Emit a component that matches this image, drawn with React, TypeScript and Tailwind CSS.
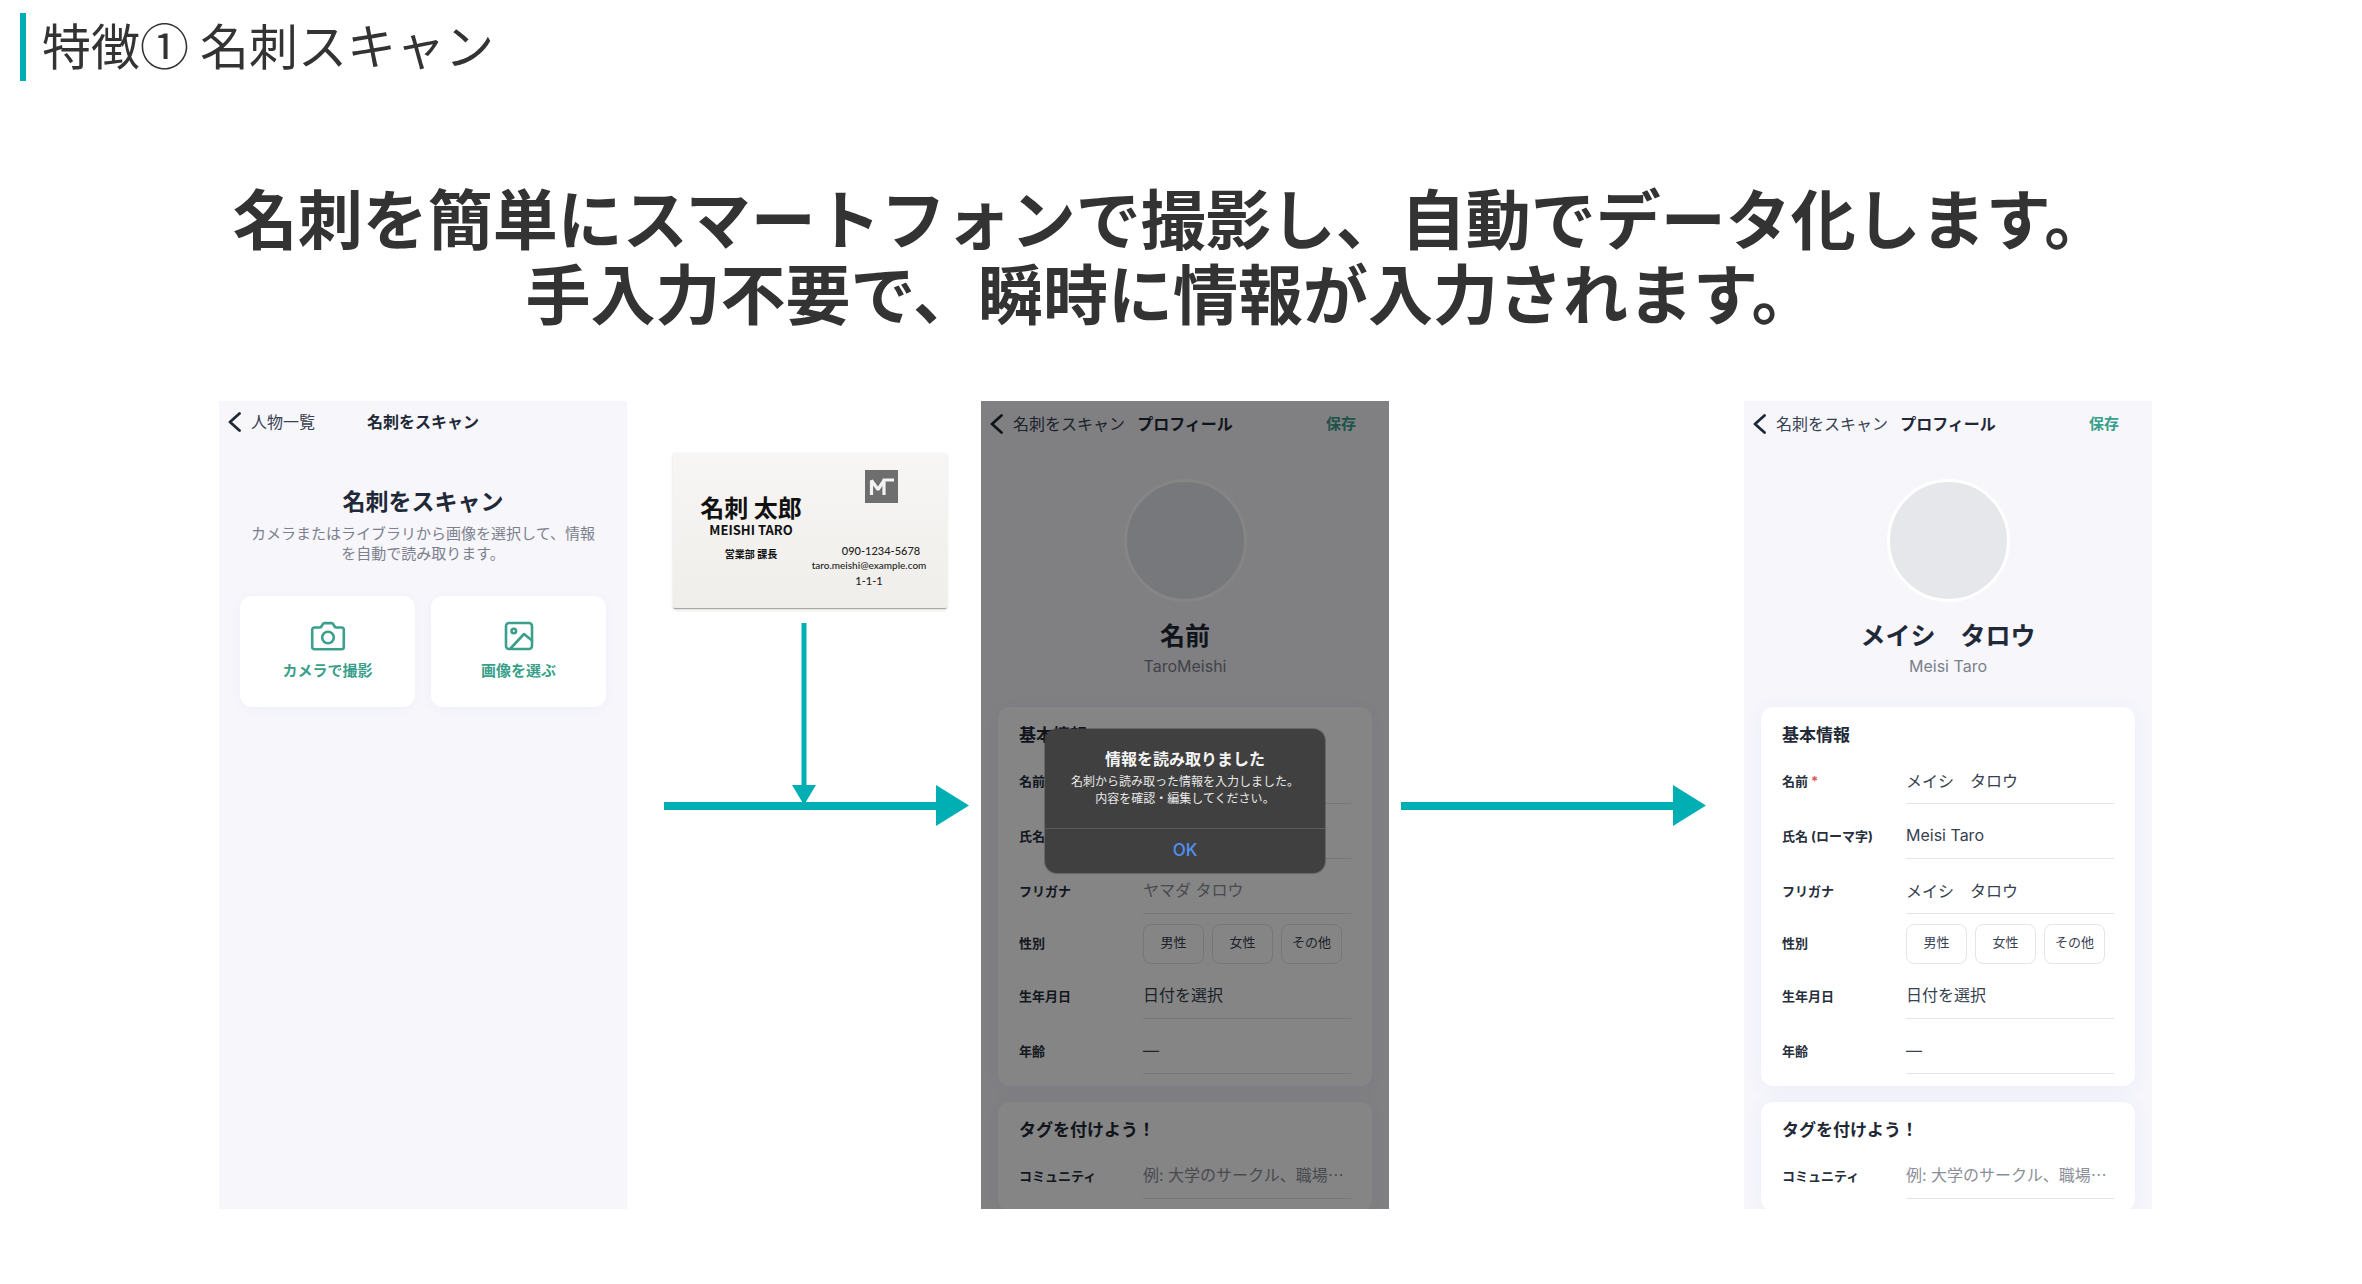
import React from "react";

function Chevron() {
  return (
    <svg width="14" height="20" viewBox="0 0 14 20" fill="none" stroke="currentColor" strokeWidth="2.8" strokeLinecap="round" strokeLinejoin="round" aria-hidden="true">
      <path d="M11.500 1.500 2 10l9.500 8.500" />
    </svg>
  );
}

function ScreenHeader({ back, title, action, className }: { back: string; title: string; action?: string; className: string }) {
  return (
    <header className={`grid grid-cols-[1fr_auto_1fr] items-center px-[9px] pb-[2px] text-[#1f2937] ${className}`}>
      <button type="button" className="flex items-center gap-[9px] justify-self-start text-[16px] leading-6 whitespace-nowrap text-[#374151]">
        <span className="text-[#1f2937]"><Chevron /></span>
        {back}
      </button>
      <h2 className="text-[16px] leading-6 font-bold whitespace-nowrap">{title}</h2>
      {action && (
        <button type="button" className="mr-6 justify-self-end text-[15px] leading-6 font-bold text-[#3a9f8b]">{action}</button>
      )}
    </header>
  );
}

function CameraIcon() {
  return (
    <svg width="36" height="30" viewBox="0 0 36 30" fill="none" stroke="currentColor" strokeWidth="2.6" strokeLinejoin="round" strokeLinecap="round" aria-hidden="true">
      <path d="M4.500 6.500h5.200c.8 0 1.300-.3 1.700-1l1.400-2.400c.4-.7.9-1 1.700-1h7c.8 0 1.300.3 1.700 1l1.400 2.400c.4.7.9 1 1.700 1h5.200c1.400 0 2.300.9 2.300 2.300v17.200c0 1.400-.9 2.300-2.300 2.300h-27c-1.400 0-2.300-.9-2.300-2.300V8.800c0-1.400.9-2.300 2.300-2.300Z" />
      <circle cx="18" cy="16.500" r="5.800" />
    </svg>
  );
}

function PictureIcon() {
  return (
    <svg width="30" height="30" viewBox="0 0 30 30" fill="none" stroke="currentColor" strokeWidth="2.6" strokeLinejoin="round" strokeLinecap="round" aria-hidden="true">
      <rect x="2" y="2" width="26" height="26" rx="3" />
      <circle cx="9.800" cy="10" r="2.300" />
      <path d="M6.500 27.500 20 13l8 6.500" />
    </svg>
  );
}

const PICK =
  "flex h-[111px] flex-col items-center justify-center gap-2 rounded-xl bg-white shadow-[0_2px_12px_rgba(80,90,200,0.04)]";

function ScanScreen() {
  return (
    <section className="aspect-[408/808] min-w-0 overflow-hidden bg-[#f6f6fb]">
      <ScreenHeader back="人物一覧" title="名刺をスキャン" className="h-[43px]" />
      <div className="mt-[42px] px-7 text-center">
        <h3 className="text-[23px] leading-8 font-bold text-[#1f2937]">名刺をスキャン</h3>
        <p className="mt-[6px] text-[15px] leading-5 text-[#7b808c]">カメラまたはライブラリから画像を選択して、情報を自動で読み取ります。</p>
      </div>
      <div className="mt-8 grid grid-cols-2 gap-4 px-[21px] text-[15px] leading-6 font-bold text-[#3a9f8b]">
        <button type="button" className={PICK}>
          <CameraIcon />
          カメラで撮影
        </button>
        <button type="button" className={PICK}>
          <PictureIcon />
          画像を選ぶ
        </button>
      </div>
    </section>
  );
}

function Row({ label, htmlFor, required, children }: { label: string; htmlFor: string; required?: boolean; children: React.ReactNode }) {
  return (
    <div className="flex items-center">
      <label htmlFor={htmlFor} className="w-[124px] shrink-0 pb-[2px] text-[13px] leading-5 font-bold whitespace-nowrap text-[#262e3c]">
        {label}
        {required && <span className="text-[#e25555]"> *</span>}
      </label>
      <div className="min-w-0 flex-1">{children}</div>
    </div>
  );
}

const FIELD =
  "block h-[45px] w-full border-b border-[#e4e5e9] bg-transparent pb-[2px] text-left text-[16px] leading-[42px] text-[#374151] outline-none placeholder:text-[#8b8f99]";

function Card({ title, children }: { title: string; children: React.ReactNode }) {
  return (
    <section className="rounded-xl bg-white px-[21px] pt-4 pb-3 shadow-[0_2px_20px_rgba(80,90,220,0.06)]">
      <h4 className="text-[17px] leading-6 font-bold text-[#1f2937]">{title}</h4>
      <div className="mt-3 flex flex-col gap-[10px]">{children}</div>
    </section>
  );
}

type Profile = { id: string; heading: string; sub: string; name: string; roman: string; kana: string };

function ProfileScreen({ p, children }: { p: Profile; children?: React.ReactNode }) {
  return (
    <section className="relative aspect-[408/808] min-w-0 overflow-hidden bg-[#f6f6fb]">
      <ScreenHeader back="名刺をスキャン" title="プロフィール" action="保存" className="h-12" />
      <div className="mt-[30px] flex flex-col items-center">
        <div className="size-[123px] rounded-full border-[3px] border-white bg-[#e5e7eb]" />
        <h3 className="mt-[18px] text-[25px] leading-8 font-bold whitespace-pre text-[#1f2937]">{p.heading}</h3>
        <p className="mt-[2px] text-[16px] leading-6 text-[#7b808c]">{p.sub}</p>
      </div>
      <div className="mt-[29px] flex flex-col gap-4 px-[17px]">
        <Card title="基本情報">
          <Row label="名前" htmlFor={`${p.id}-name`} required>
            <input id={`${p.id}-name`} defaultValue={p.name} className={FIELD} />
          </Row>
          <Row label="氏名 (ローマ字)" htmlFor={`${p.id}-roman`}>
            <input id={`${p.id}-roman`} defaultValue={p.roman} className={FIELD} />
          </Row>
          <Row label="フリガナ" htmlFor={`${p.id}-kana`}>
            <input id={`${p.id}-kana`} defaultValue={p.kana} placeholder="ヤマダ タロウ" className={FIELD} />
          </Row>
          <Row label="性別" htmlFor={`${p.id}-male`}>
            <div className="flex gap-2 text-[13px] text-[#374151]">
              {["男性", "女性", "その他"].map((g, i) => (
                <button key={g} id={i === 0 ? `${p.id}-male` : undefined} type="button" className="h-10 w-[61px] rounded-lg border border-[#e4e5e9] pb-[2px]">
                  {g}
                </button>
              ))}
            </div>
          </Row>
          <Row label="生年月日" htmlFor={`${p.id}-birth`}>
            <button id={`${p.id}-birth`} type="button" className={FIELD}>日付を選択</button>
          </Row>
          <Row label="年齢" htmlFor={`${p.id}-age`}>
            <output id={`${p.id}-age`} className={FIELD}>—</output>
          </Row>
        </Card>
        <Card title="タグを付けよう！">
          <Row label="コミュニティ" htmlFor={`${p.id}-community`}>
            <input id={`${p.id}-community`} placeholder="例: 大学のサークル、職場⋯" className={FIELD} />
          </Row>
        </Card>
      </div>
      {children}
    </section>
  );
}

function ReadDialog() {
  return (
    <div className="absolute inset-0 bg-black/48 pt-[328px]">
      <div role="alertdialog" aria-labelledby="dlg-title" className="mx-auto w-[280px] rounded-xl bg-[#404040] text-center shadow-[0_0_0_1px_rgba(60,60,60,0.4)]">
        <div className="flex h-[99px] flex-col items-center pt-[18px]">
          <h3 id="dlg-title" className="text-[16px] leading-6 font-bold text-[#f5f5f5]">情報を読み取りました</h3>
          <p className="mt-[2px] text-[12px] leading-[17px] text-[#e8e8e8]">
            名刺から読み取った情報を入力しました。
            <br />
            内容を確認・編集してください。
          </p>
        </div>
        <button type="button" className="h-[45px] w-full border-t border-[#5c5c5e] text-[17px] font-medium text-[#5090f0]">OK</button>
      </div>
    </div>
  );
}

function ArrowRight() {
  return (
    <div className="flex items-center text-[#00afb3]">
      <div className="h-2 flex-1 bg-current" />
      <svg width="33" height="41" viewBox="0 0 33 41" fill="currentColor" aria-hidden="true">
        <path d="M0 0 33 20.500 0 41Z" />
      </svg>
    </div>
  );
}

function ArrowDown() {
  return (
    <svg width="24" height="182" viewBox="0 0 24 182" fill="currentColor" className="self-center text-[#00afb3]" aria-hidden="true">
      <path d="M9.500 0h5v162H24L12 182 0 162h9.500Z" />
    </svg>
  );
}

function BusinessCard() {
  return (
    <div className="mr-[34px] ml-[46px] flex h-[156px] rounded-[2px] border-b border-[#a9a69f] bg-linear-to-b from-[#f7f6f4] to-[#efeeeb] whitespace-nowrap text-[#111] shadow-[0_1px_3px_rgba(0,0,0,0.15)]">
      <div className="flex w-[138px] flex-col items-center pt-[39px] pl-[18px] font-['Noto_Sans_CJK_JP',sans-serif] font-bold">
        <p className="text-[24px] leading-[30px]">名刺 太郎</p>
        <p className="text-[13px] leading-4">MEISHI TARO</p>
        <p className="mt-2 text-[10px] leading-4">営業部 課長</p>
      </div>
      <div className="flex flex-1 flex-col items-center pt-[17px] pr-5 font-['Lato','Noto_Sans_CJK_JP',sans-serif] font-medium text-[#222]">
        <div className="pl-6">
          <svg width="33" height="33" viewBox="0 0 33 33" aria-hidden="true">
            <rect width="33" height="33" fill="#6e6e6e" />
            <path d="M6.500 25V10.500l6.500 9 6-9V25M17.500 10h11.500" fill="none" stroke="#f3f3f1" strokeWidth="3.200" strokeLinejoin="bevel" />
          </svg>
        </div>
        <p className="mt-10 pl-6 text-[11px] leading-[15px]">090-1234-5678</p>
        <p className="text-[10px] leading-[15px]">taro.meishi@example.com</p>
        <p className="text-[11px] leading-[15px]">1-1-1</p>
      </div>
    </div>
  );
}

const scanned: Profile = { id: "reading", heading: "名前", sub: "TaroMeishi", name: "", roman: "", kana: "" };
const filled: Profile = { id: "filled", heading: "メイシ　タロウ", sub: "Meisi Taro", name: "メイシ　タロウ", roman: "Meisi Taro", kana: "メイシ　タロウ" };

export default function App() {
  return (
    <main lang="ja" className="min-h-screen bg-white pt-[13px] font-['Noto_Sans_CJK_JP',sans-serif] text-[#333]">
      <div className="ml-5 flex h-[68px] items-center border-l-[6px] border-[#00afb3] pb-2 pl-4">
        <h1 className="text-[49px] leading-none font-normal">特徴① 名刺スキャン</h1>
      </div>
      <p className="mt-[98px] pr-5 text-center text-[65px] leading-[75px] font-bold">
        名刺を簡単にスマートフォンで撮影し、自動でデータ化します。
        <br />
        手入力不要で、瞬時に情報が入力されます。
      </p>
      <div className="mt-[72px] grid grid-cols-[408fr_354fr_408fr_355fr_408fr] pr-[210px] pl-[219px] font-['Inter','Noto_Sans_CJK_JP',sans-serif]">
        <ScanScreen />
        <div className="flex min-w-0 flex-col pt-[52px]">
          <BusinessCard />
          <div className="mt-[14px] flex flex-col">
            <ArrowDown />
            <div className="-mt-5 pr-3 pl-[37px]"><ArrowRight /></div>
          </div>
        </div>
        <ProfileScreen p={scanned}>
          <ReadDialog />
        </ProfileScreen>
        <div className="min-w-0 pt-[384px] pr-[38px] pl-3"><ArrowRight /></div>
        <ProfileScreen p={filled} />
      </div>
    </main>
  );
}
